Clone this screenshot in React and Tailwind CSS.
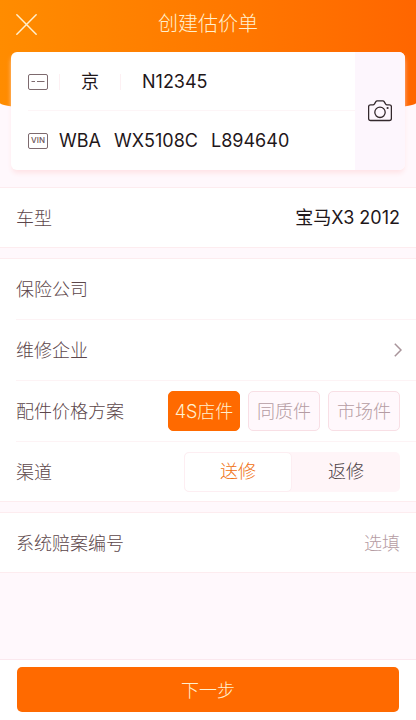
import { useState } from "react";

function Row({ children }) {
  return (
    <div className="ml-4 flex h-[61px] items-center justify-between gap-4 border-b border-[#fdf3f5] pr-4 last:h-[59px] last:border-b-0">
      {children}
    </div>
  );
}

function Section({ children }) {
  return <section className="border-y border-[#fdecef] bg-white">{children}</section>;
}

function CloseIcon() {
  return (
    <svg className="size-[21px]" viewBox="0 0 20 20" fill="none" stroke="#fff0cf" strokeWidth="1.4" strokeLinecap="round" aria-hidden="true">
      <path d="M.8.8l18.4 18.4M19.2.8L.8 19.2" />
    </svg>
  );
}

function PlateIcon() {
  return (
    <svg className="h-4 w-5 shrink-0" viewBox="0 0 20 16" fill="none" stroke="#7d6a6e" aria-hidden="true">
      <rect x=".5" y=".5" width="19" height="15" rx="1.5" />
      <path d="M3.5 7.5h3.500M9 7.500h7.500" strokeWidth="1.2" />
    </svg>
  );
}

function CameraIcon() {
  return (
    <svg className="h-[22px] w-6" viewBox="0 0 24 22" fill="none" stroke="#33282c" strokeWidth="1.3" strokeLinejoin="round" aria-hidden="true">
      <path d="M2.6 4.8H5c.7 0 1.1-.3 1.5-.9l1.2-2c.4-.7.8-1 1.5-1h5.600c.7 0 1.100.3 1.500 1l1.200 2c.4.6.8.9 1.500.9h2.400c1.200 0 2 .8 2 2v11.700c0 1.200-.8 2-2 2H2.600c-1.200 0-2-.8-2-2V6.800c0-1.200.8-2 2-2z" />
      <circle cx="12" cy="12.300" r="5.200" />
      <circle cx="19.600" cy="8" r="1.100" fill="#33282c" stroke="none" />
    </svg>
  );
}

function ChevronIcon() {
  return (
    <svg className="h-[14px] w-2" viewBox="0 0 8 14" fill="none" stroke="#a8949a" strokeWidth="1.5" aria-hidden="true">
      <path d="M.8.8L7 7 .8 13.200" />
    </svg>
  );
}

const plans = ["4S店件", "同质件", "市场件"];
const channels = ["送修", "返修"];

export default function App() {
  const [plan, setPlan] = useState(plans[0]);
  const [channel, setChannel] = useState(channels[0]);

  return (
    <div className="flex min-h-screen flex-col bg-[#fff8fc] font-['Inter','Noto_Sans_CJK_SC',sans-serif] text-lg font-light text-[#5c464a]">
      <div className="relative mb-4">
        <div className="absolute inset-x-0 top-0 h-[113px] rounded-b-[50%_10px] bg-linear-to-r from-[#ff8c00] to-[#ff6600]" />
        <header className="relative grid h-[52px] grid-cols-[1fr_auto_1fr] items-center px-4 pb-1">
          <button type="button" aria-label="关闭" className="justify-self-start">
            <CloseIcon />
          </button>
          <h1 className="text-xl text-[#fff0cf]">创建估价单</h1>
        </header>

        <div className="relative mx-[11px] flex h-[118px] overflow-hidden rounded-md bg-white font-normal text-[#1f171a] shadow-[0_4px_5px_-1px_#ffe3e6]">
          <div className="flex min-w-0 flex-1 flex-col pl-[17px]">
            <div className="flex h-[59px] items-center border-b border-[#fdf5f7] pt-0.5">
              <PlateIcon />
              <div className="ml-[11px] flex h-4 w-[62px] items-center border-x border-[#fdf0f3]">
                <select aria-label="省份" className="w-full appearance-none bg-transparent text-center outline-none">
                  <option>京</option>
                </select>
              </div>
              <input aria-label="车牌号" defaultValue="N12345" className="ml-[21px] min-w-0 flex-1 bg-transparent outline-none" />
            </div>
            <div className="flex h-[59px] items-center">
              <span className="flex h-4 w-5 shrink-0 items-center justify-center rounded-xs border border-[#7d6a6e] text-[8px] font-medium text-[#6b5558]">VIN</span>
              <div role="group" aria-label="车架号" className="ml-[11px] flex min-w-0 flex-1 gap-3">
                <input aria-label="车架号前段" defaultValue="WBA" className="w-[43px] bg-transparent outline-none" />
                <input aria-label="车架号中段" defaultValue="WX5108C" className="w-[85px] bg-transparent outline-none" />
                <input aria-label="车架号后段" defaultValue="L894640" className="min-w-0 flex-1 bg-transparent outline-none" />
              </div>
            </div>
          </div>
          <button type="button" aria-label="拍照识别" className="flex w-[50px] items-center justify-center bg-[#fdf6fd]">
            <CameraIcon />
          </button>
        </div>
      </div>

      <main className="flex flex-col gap-[10px] pt-px">
        <Section>
          <Row>
            <label htmlFor="model" className="shrink-0 pt-0.5">车型</label>
            <input id="model" defaultValue="宝马X3 2012" className="min-w-0 flex-1 bg-transparent text-right font-normal text-[#1f171a] outline-none" />
          </Row>
        </Section>

        <Section>
          <Row>
            <label htmlFor="insurer" className="shrink-0 pt-0.5">保险公司</label>
            <input id="insurer" className="min-w-0 flex-1 bg-transparent text-right outline-none" />
          </Row>
          <Row>
            <button type="button" className="-mr-1 flex h-full flex-1 items-center justify-between pr-0.5">
              <span className="pt-0.5">维修企业</span>
              <ChevronIcon />
            </button>
          </Row>
          <Row>
            <span id="plan-label" className="pt-0.5">配件价格方案</span>
            <div role="radiogroup" aria-labelledby="plan-label" className="flex gap-2">
              {plans.map((name) => (
                <label key={name} className="relative flex h-10 w-[72px] items-center justify-center rounded-[5px] border border-[#f8dfe5] bg-[#fff8fc] pt-0.5 text-[#b59ca3] has-checked:border-[#ff6a00] has-checked:bg-[#ff6a00] has-checked:text-[#fff0cf]">
                  <input type="radio" name="plan" checked={plan === name} onChange={() => setPlan(name)} className="sr-only" />
                  {name}
                </label>
              ))}
            </div>
          </Row>
          <Row>
            <span id="channel-label" className="pt-0.5">渠道</span>
            <div role="radiogroup" aria-labelledby="channel-label" className="flex h-10 w-[216px] rounded-[5px] bg-[#fff5f8]">
              {channels.map((name) => (
                <label key={name} className="relative flex flex-1 items-center justify-center rounded-[5px] border border-transparent text-[#4b4044] has-checked:border-[#fdeef2] has-checked:bg-white has-checked:text-[#f07010]">
                  <input type="radio" name="channel" checked={channel === name} onChange={() => setChannel(name)} className="sr-only" />
                  {name}
                </label>
              ))}
            </div>
          </Row>
        </Section>

        <Section>
          <Row>
            <label htmlFor="claim" className="shrink-0 pt-0.5">系统赔案编号</label>
            <input id="claim" placeholder="选填" className="min-w-0 flex-1 bg-transparent pt-0.5 text-right outline-none placeholder:text-[#b59ca3]" />
          </Row>
        </Section>
      </main>

      <footer className="mt-auto border-t border-[#fbe8ee] bg-white px-[17px] pt-[7px] pb-2">
        <button type="button" className="h-[45px] w-full rounded-[5px] bg-[#ff6a00] pt-0.5 text-[#fff0cf]">下一步</button>
      </footer>
    </div>
  );
}
